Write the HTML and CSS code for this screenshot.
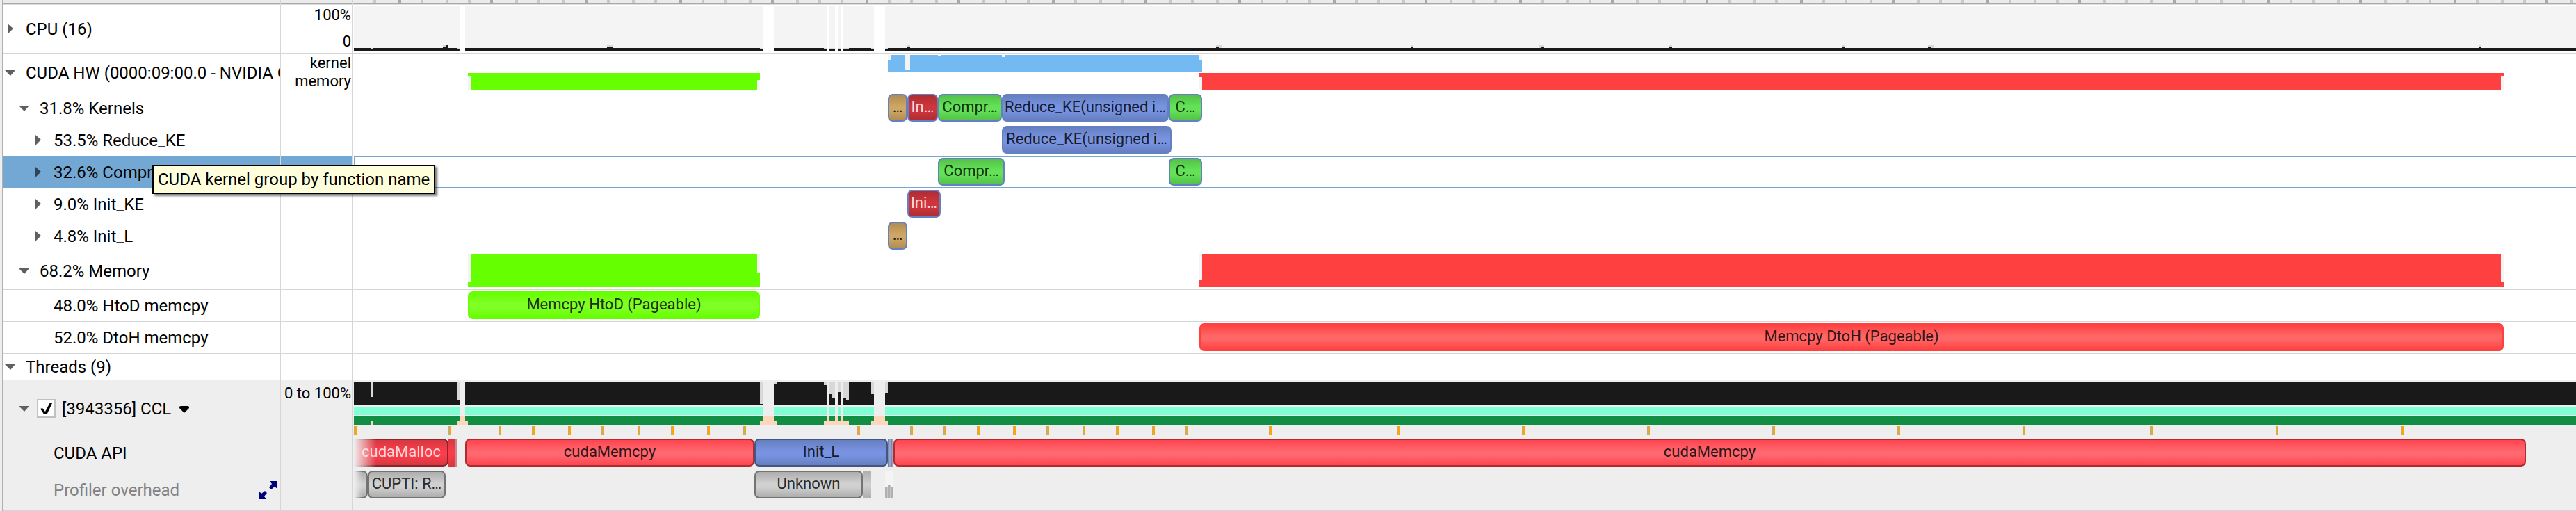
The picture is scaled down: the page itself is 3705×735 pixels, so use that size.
FILE: index.html
```html
<!DOCTYPE html>
<html lang="en">
<head>
<meta charset="utf-8">
<title>Profiler timeline</title>
<link rel="stylesheet" href="styles.css">
</head>
<body>
<main class="timeline">
  <header class="row ruler">
    <div class="name"></div><div class="scale"></div>
    <div class="lane"><svg class="graph" id="ruler" viewBox="0 0 3196 4" preserveAspectRatio="none"></svg></div>
  </header>

  <section class="row row-cpu">
    <div class="name"><button class="toggle closed" aria-label="Expand CPU"></button><span class="label">CPU (16)</span></div>
    <div class="scale spread"><span>100%</span><span>0</span></div>
    <div class="lane">
      <svg class="graph" viewBox="0 0 3196 69" preserveAspectRatio="none">
        <path class="c-idle" d="M0 2H152V66H0zM160 2H588V66H160zM604 2H680V66H604zM684 2h8V66h-8zM696 2h4V66h-4zM704 2H748V66H704zM764 2H3196V66H764z"/>
        <path class="c-busy" d="M0 62H152V66H0zM160 62H588V66H160zM604 62H680V66H604zM684 62h8V66h-8zM696 62h4V66h-4zM704 62H748V66H704zM764 62H3196V66H764z"/>
        <path class="c-peak" d="M24 62h4v2h-4zM148 62h4v2h-4zM584 62h4v2h-4zM676 62h4v2h-4zM684 62h8v2h-8zM696 62h4v2h-4zM704 62h8v2h-8zM744 62h4v2h-4zM764 62h4v2h-4zM128 58h4v3h-4zM364 58h8v3h-8zM796 58h4v3h-4zM1240 58h8v4h-8zM1520 58h4v3h-4zM1704 58h8v4h-8zM1892 58h4v3h-4zM2140 58h4v3h-4zM2264 58h8v4h-8zM3056 58h4v2h-4z"/>
        <path class="c-busy" d="M128 61h4v1h-4zM132 58h4v4h-4zM364 61h4v1h-4zM368 60h4v2h-4zM796 61h4v1h-4zM1240 61h4v1h-4zM1520 61h4v1h-4zM1708 61h4v1h-4zM1892 61h4v1h-4zM2140 61h4v1h-4zM2264 61h4v1h-4zM3056 60h4v2h-4z"/>
      </svg>
    </div>
  </section>

  <section class="row row-hw">
    <div class="name"><button class="toggle open" aria-label="Collapse CUDA HW"></button><span class="label">CUDA HW (0000:09:00.0 - NVIDIA G</span></div>
    <div class="scale"><span>kernel</span><span>memory</span></div>
    <div class="lane">
      <svg class="graph" viewBox="0 0 3196 55" preserveAspectRatio="none">
        <path class="c-idle" d="M768 2H1220V26H768zM164 28H584V52H164zM1216 28H3092V52H1216z"/>
        <path class="c-kernel" d="M768 9h4V2H792V24h8V2H840V4h4V2H932V5h4V2H1216V9h4V26H768z"/>
        <path class="c-htod" d="M164 28H584V38h-4V52H168V32h-4z"/>
        <path class="c-dtoh" d="M1216 28H3092v4h-4V52H1220V34h-4z"/>
      </svg>
    </div>
  </section>

  <section class="row">
    <div class="name lv1"><button class="toggle open" aria-label="Collapse Kernels"></button><span class="label">31.8% Kernels</span></div>
    <div class="scale"></div>
    <div class="lane">
      <div class="event tan" style="--s:768;--e:796">…</div>
      <div class="event crimson" style="--s:796;--e:840">In…</div>
      <div class="event green" style="--s:840;--e:932">Compr…</div>
      <div class="event blue" style="--s:932;--e:1172">Reduce_KE(unsigned i…</div>
      <div class="event green" style="--s:1172;--e:1220">C…</div>
    </div>
  </section>

  <section class="row">
    <div class="name lv2"><button class="toggle closed" aria-label="Expand Reduce_KE"></button><span class="label">53.5% Reduce_KE</span></div>
    <div class="scale"></div>
    <div class="lane"><div class="event blue" style="--s:932;--e:1176">Reduce_KE(unsigned i…</div></div>
  </section>

  <section class="row selected">
    <div class="name lv2"><button class="toggle closed" aria-label="Expand Compress_KE"></button><span class="label">32.6% Compr</span>
      <div class="tooltip" role="tooltip">CUDA kernel group by function name</div></div>
    <div class="scale"></div>
    <div class="lane">
      <div class="event green" style="--s:840;--e:936">Compr…</div>
      <div class="event green" style="--s:1172;--e:1220">C…</div>
    </div>
  </section>

  <section class="row">
    <div class="name lv2"><button class="toggle closed" aria-label="Expand Init_KE"></button><span class="label">9.0% Init_KE</span></div>
    <div class="scale"></div>
    <div class="lane"><div class="event crimson" style="--s:796;--e:844">Ini…</div></div>
  </section>

  <section class="row">
    <div class="name lv2"><button class="toggle closed" aria-label="Expand Init_L"></button><span class="label">4.8% Init_L</span></div>
    <div class="scale"></div>
    <div class="lane"><div class="event tan" style="--s:768;--e:796">…</div></div>
  </section>

  <section class="row row-memory">
    <div class="name lv1"><button class="toggle open" aria-label="Collapse Memory"></button><span class="label">68.2% Memory</span></div>
    <div class="scale"></div>
    <div class="lane">
      <svg class="graph" viewBox="0 0 3196 53" preserveAspectRatio="none">
        <path class="c-idle" d="M164 2H584V50H164zM1216 2H3092V50H1216z"/>
        <path class="c-htod" d="M168 2H580V29h4V50H164V42h4z"/>
        <path class="c-dtoh" d="M1220 2H3088V42h4V50H1216V40h4z"/>
      </svg>
    </div>
  </section>

  <section class="row">
    <div class="name lv2 leaf"><span class="label">48.0% HtoD memcpy</span></div>
    <div class="scale"></div>
    <div class="lane"><div class="event lime" style="--s:164;--e:584">Memcpy HtoD (Pageable)</div></div>
  </section>

  <section class="row">
    <div class="name lv2 leaf"><span class="label">52.0% DtoH memcpy</span></div>
    <div class="scale"></div>
    <div class="lane"><div class="event red" style="--s:1216;--e:3092">Memcpy DtoH (Pageable)</div></div>
  </section>

  <section class="row row-threads">
    <div class="name"><button class="toggle open" aria-label="Collapse Threads"></button><span class="label">Threads (9)</span></div>
    <div class="scale"></div>
    <div class="lane"></div>
  </section>

  <section class="row row-thread shaded">
    <div class="name lv1"><button class="toggle open" aria-label="Collapse thread"></button>
      <label class="check"><input type="checkbox" checked><span class="label">[3943356] CCL</span></label>
      <button class="menu" aria-label="Thread menu"><svg width="14" height="10" viewBox="0 0 14 10"><path d="M2 0h10q2 0 2 2v1L8 9q-1 1-2 0L0 3V2q0-2 2-2z"/></svg></button></div>
    <div class="scale"><span>0 to 100%</span></div>
    <div class="lane">
      <svg class="graph" id="thread" viewBox="0 0 3196 81" preserveAspectRatio="none">
        <path class="c-busy" d="M0 2H152V36H0zM160 2H588V36H160zM604 2H680V36H604zM684 2h8V36h-8zM696 2h4V36h-4zM704 2H748V36H704zM764 2H3196V36H764z"/>
        <path class="c-peak" d="M24 2h4v22h-4zM148 2h4v26h-4zM160 2h4v1h-4zM584 2h4v32h-4zM604 2h4v3h-4zM676 2h4v5h-4zM684 2h4v17h-4zM688 2h4v24h-4zM696 2h4v15h-4zM704 2h4v23h-4zM708 2h4v27h-4zM744 2h4v17h-4zM764 2h4v16h-4z"/>
        <path class="c-core" d="M0 38H152V50H0zM160 38H588V50H160zM604 38H680V50H604zM684 38h8V50h-8zM696 38h4V50h-4zM704 38H748V50H704zM764 38H3196V50H764z"/>
        <path class="c-state" d="M0 52H3196V64H0z"/>
        <path class="c-wait" d="M24 58h4v6h-4zM148 58h4v-6h8v6h4v6h-16zM584 58h4v-6h16v6h4v6h-24zM676 58h4v-6h4v6h8v-6h4v6h4v-6h4v6h8v6h-36zM744 58h4v-6h16v6h4v6h-24z"/>
      </svg>
    </div>
  </section>

  <section class="row shaded">
    <div class="name lv2 leaf"><span class="label">CUDA API</span></div>
    <div class="scale"></div>
    <div class="lane">
      <div class="event malloc cut" style="--s:0;--e:136">cudaMalloc</div>
      <div class="sliver malloc-s" style="--s:136;--e:146"></div>
      <div class="sliver malloc-e" style="--s:146;--e:148"></div>
      <div class="event api" style="--s:160;--e:576">cudaMemcpy</div>
      <div class="event launch" style="--s:576;--e:768">Init_L</div>
      <div class="sliver blue-s" style="--s:768;--e:770"></div>
      <div class="sliver slate-s" style="--s:770;--e:772"></div>
      <div class="sliver blue-s" style="--s:772;--e:774"></div>
      <div class="sliver slate-s" style="--s:774;--e:776"></div>
      <div class="event api" style="--s:776;--e:3124">cudaMemcpy</div>
    </div>
  </section>

  <section class="row row-overhead shaded">
    <div class="name lv2 leaf muted"><span class="label">Profiler overhead</span>
      <button class="expand" aria-label="Expand row"><svg width="28" height="28" viewBox="0 0 28 28"><path d="M16 1H27V12L23 9L18 13L15 10L19 5z"/><path d="M1 16L4 19L9 15L12 18L8 23L11 27H1z"/></svg></button></div>
    <div class="scale"></div>
    <div class="lane">
      <div class="event gray cut short" style="--s:0;--e:20"></div>
      <div class="event gray" style="--s:20;--e:132">CUPTI: R…</div>
      <div class="event gray" style="--s:576;--e:732">Unknown</div>
      <div class="sliver gray-s" style="--s:732;--e:744"></div>
      <svg class="graph" viewBox="0 0 3196 59" preserveAspectRatio="none">
        <path class="c-idle" d="M764 2h12V42h-12z"/>
        <path class="c-over" d="M764 26h4v-4h4v4h4v16h-12z"/>
        <path class="c-over-lt" d="M767 26h1V42h-1zM771 22h1V42h-1z"/>
      </svg>
    </div>
  </section>
</main>
<script src="ticks.js"></script>
</body>
</html>
```
FILE: ticks.js
```js
const NS = "http://www.w3.org/2000/svg";

function bar(svg, cls, x, y, w, h) {
  const r = document.createElementNS(NS, "rect");
  r.setAttribute("class", cls);
  r.setAttribute("x", x);
  r.setAttribute("y", y);
  r.setAttribute("width", w);
  r.setAttribute("height", h);
  svg.appendChild(r);
}

/* Ruler: four divisions to each major mark, snapped to 4-unit buckets. */
const ruler = document.getElementById("ruler");
for (let k = -1; k < 94; k++) {
  const x = 4 * Math.floor((65 + 33.59 * k) / 4);
  bar(ruler, k % 4 === 0 ? "c-major" : "c-minor", x, 0, 4, 4);
}

/* Call-stack samples of the thread. */
const samples = [0, 136, 208, 256, 308, 356, 408, 456, 508, 560, 724, 800, 848,
  896, 948, 996, 1048, 1096, 1148, 1196, 1316, 1500, 1680, 1860, 2040, 2220,
  2400, 2584, 2764, 2944];
const thread = document.getElementById("thread");
for (const x of samples) {
  bar(thread, "c-sample-lt", x, 66, 2, 12);
  bar(thread, "c-sample", x + 2, 66, 2, 12);
}
```
FILE: styles.css
```css
* { box-sizing: border-box; }

body {
  margin: 0;
  background: #eee;
  color: #000;
  font-family: Roboto, "Liberation Sans", sans-serif;
  font-size: 24px;
}

button {
  padding: 0;
  border: 0;
  background: none;
  flex: none;
}

.timeline {
  margin-left: 3px;
  border-left: 1px solid #b0b0b0;
  padding-left: 1px;
  background: #fff;
  overflow: hidden;
}

.row {
  display: grid;
  grid-template-columns: 399px 104px minmax(0, 1fr);
  height: 46px;
  border-bottom: 1px solid #d6d6d6;
  background: #fff;
}
.ruler {
  height: 7px;
  background: #ebebeb;
  border-bottom-color: #ddd;
  box-shadow: inset 0 -2px #a9a9a9;
}
.row-cpu { height: 70px; }
.row-hw { height: 56px; }
.row-memory { height: 54px; }
.row-threads { height: 38px; }
.row-thread { height: 82px; }
.row-overhead { height: 60px; }
.shaded { background: #eee; }

.name {
  position: relative;
  display: flex;
  align-items: center;
  padding-left: 2px;
  border-right: 2px solid #d6d6d6;
  min-width: 0;
}
.lv1 { padding-left: 22px; }
.lv2 { padding-left: 42px; }
.leaf { padding-left: 72px; }
.muted { color: #828282; }

.label {
  line-height: 28px;
  white-space: nowrap;
  overflow: hidden;
  min-width: 0;
}
.name > .label { flex: 1; }

.toggle {
  width: 15px;
  height: 15px;
  margin-right: 15px;
  background: #606060;
}
.toggle.open { clip-path: polygon(0 4px, 15px 4px, 8px 12px); }
.toggle.closed { clip-path: polygon(4px 0, 12px 7px, 4px 15px); }

.scale {
  border-right: 2px solid #d6d6d6;
  padding: 1px 1px 0 0;
  display: flex;
  flex-direction: column;
  align-items: flex-end;
  font-size: 22px;
  line-height: 26px;
  white-space: nowrap;
}
.spread { justify-content: space-between; padding: 2px 1px 3px 0; }
.row-thread .scale { padding-top: 6px; }
.ruler .scale { padding: 0; }

.lane {
  position: relative;
  margin-left: 1px;
  min-width: 0;
}

.graph {
  position: absolute;
  inset: 0;
  width: 100%;
  height: 100%;
  shape-rendering: crispEdges;
}
.ruler .graph { height: 4px; }

.c-major { fill: #a9a9a9; }
.c-minor { fill: #c8c8c8; }
.c-idle { fill: #f4f4f4; }
.c-busy { fill: #191919; }
.c-peak { fill: #d8d8d8; }
.c-kernel { fill: #74baf2; }
.c-htod { fill: #66ff00; }
.c-dtoh { fill: #ff4040; }
.c-core { fill: #7fffd4; }
.c-state { fill: #128e44; }
.c-wait { fill: #fdd6bb; }
.c-sample { fill: #ffa500; }
.c-sample-lt { fill: #c9aa72; }
.c-over { fill: #b0b0b0; }
.c-over-lt { fill: #c8c8c8; }

/* Events sit on the time axis: --s and --e are start and end ticks of 3196. */
.event,
.sliver {
  position: absolute;
  top: 2px;
  height: 40px;
  left: calc(var(--s) / 3196 * 100%);
  width: calc((var(--e) - var(--s)) / 3196 * 100%);
}
.event {
  border: 2px solid #6480c0;
  border-radius: 7px;
  font-size: 22px;
  line-height: 34px;
  text-align: center;
  white-space: nowrap;
  overflow: hidden;
  color: #1c1c1c;
}
.tan { background: linear-gradient(#b08d55, #cfa663 45%, #cfa663 60%, #b08d55); }
.crimson { background: linear-gradient(#ae2d33, #d0353d 45%, #d0353d 60%, #ae2d33); color: #ffd9db; }
.green { background: linear-gradient(#55c04a, #62e356 45%, #62e356 60%, #55c04a); color: #12310f; }
.blue { background: linear-gradient(#667fc0, #7893e2 45%, #7893e2 60%, #667fc0); color: #171d2e; }
.lime { background: linear-gradient(#66ff00, #80ff26 45%, #80ff26 60%, #66ff00); border-color: #66ff00; color: #1a3307; }
.red { background: linear-gradient(#ff4040, #ff6666 45%, #ff6666 60%, #ff4040); border-color: #ff4040; color: #331414; }
.api { background: linear-gradient(#ff444e, #ff6870 45%, #ff6870 60%, #ff444e); border-color: #ae2b31; color: #331416; }
.launch { background: linear-gradient(#667fc0, #7893e2 45%, #7893e2 60%, #667fc0); border-color: #44557f; color: #171d2e; }
.malloc { background: linear-gradient(#d53842, #fc3e4a 45%, #fc3e4a 60%, #d53842); border-color: #8d242c; color: #ffd8da; }
.gray { background: linear-gradient(#adadad, #d0d0d0 45%, #d0d0d0 60%, #adadad); border-color: #737373; color: #2a2a2a; }

.cut {
  border-left: 0;
  border-top-left-radius: 0;
  border-bottom-left-radius: 0;
  padding-left: 2px;
  mask-image: linear-gradient(to right, transparent, #000 32px);
}
.short { mask-image: linear-gradient(to right, transparent, #000 12px); }

.malloc-s { background: linear-gradient(#d53842, #fc3e4a 50%, #d53842); }
.malloc-e { background: #c68a8e; }
.blue-s { background: linear-gradient(#667fc0, #7893e2 50%, #667fc0); }
.slate-s { background: #a0a5b4; }
.gray-s { background: linear-gradient(#adadad, #d0d0d0 50%, #adadad); }

.selected .name,
.selected .scale { background: #74a8d4; }
.selected .toggle { background: #2f4456; }
.selected .label { flex: none; }
.selected .lane { box-shadow: inset 1px 1px #74a8d4, inset 0 -1px #74a8d4; }

.tooltip {
  position: absolute;
  z-index: 2;
  left: 214px;
  top: 12px;
  padding: 5px 6px;
  border: 2px solid #000;
  background: #ffffdc;
  box-shadow: 3px 3px 3px rgba(0, 0, 0, 0.5);
  line-height: 28px;
  white-space: nowrap;
}

.row-thread .toggle { margin-right: 11px; }
.check {
  display: flex;
  align-items: center;
  gap: 9px;
}
.check input {
  appearance: none;
  width: 27px;
  height: 27px;
  margin: 0;
  border: 2px solid #c0c0c0;
  background: #fff;
  position: relative;
}
.check input:checked::after {
  content: "";
  position: absolute;
  inset: 3px;
  background: #000;
  clip-path: polygon(0 9px, 3px 8px, 7px 13px, 14px 0, 17px 1px, 9px 18px, 6px 18px);
}
.menu {
  margin-left: 12px;
  padding-top: 3px;
  display: flex;
}
.expand {
  display: flex;
  margin-right: 2px;
}
.expand svg { fill: #00007c; }
```
